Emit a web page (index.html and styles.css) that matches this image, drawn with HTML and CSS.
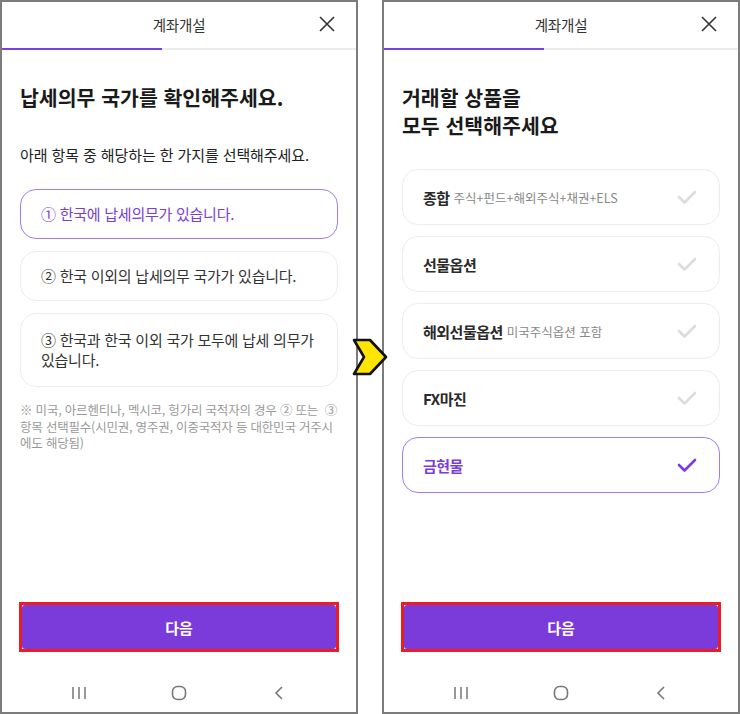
FILE: index.html
```html
<!DOCTYPE html>
<html lang="ko">
<head>
  <meta charset="UTF-8">
  <meta name="viewport" content="width=device-width, initial-scale=1.0">
  <title>계좌개설</title>
  <link rel="stylesheet" href="styles.css">
</head>
<body>
  <!-- 1단계: 납세의무 국가 -->
  <div class="phone">
    <div class="header">
      <span class="title">계좌개설</span>
      <svg class="close" width="18" height="18" viewBox="0 0 18 18"><path d="M2 2L16 16M16 2L2 16" stroke="#333" stroke-width="1.6" fill="none"/></svg>
    </div>
    <div class="progress"><div class="progress-fill"></div></div>

    <div class="content">
      <h1 class="heading">납세의무 국가를 확인해주세요.</h1>
      <p class="sub">아래 항목 중 해당하는 한 가지를 선택해주세요.</p>

      <div class="choices">
        <div class="choice selected">① 한국에 납세의무가 있습니다.</div>
        <div class="choice">② 한국 이외의 납세의무 국가가 있습니다.</div>
        <div class="choice tall">③ 한국과 한국 이외 국가 모두에 납세 의무가 있습니다.</div>
      </div>

      <p class="note">※ 미국, 아르헨티나, 멕시코, 헝가리 국적자의 경우 ② 또는 &nbsp;③ 항목 선택필수(시민권, 영주권, 이중국적자 등 대한민국 거주시에도 해당됨)</p>

      <div class="next-wrap"><button class="next">다음</button></div>
    </div>

    <div class="navbar">
      <svg width="100" height="16" viewBox="0 0 100 16"><path d="M44 2V14M50 2V14M56 2V14" stroke="#777" stroke-width="1.5"/></svg>
      <svg width="100" height="16" viewBox="0 0 100 16"><rect x="43.5" y="1.5" width="13" height="13" rx="5" stroke="#777" stroke-width="1.6" fill="none"/></svg>
      <svg width="100" height="16" viewBox="0 0 100 16"><path d="M53 2L47 8L53 14" stroke="#777" stroke-width="1.6" fill="none"/></svg>
    </div>
  </div>

  <!-- 2단계: 거래할 상품 -->
  <div class="phone">
    <div class="header">
      <span class="title">계좌개설</span>
      <svg class="close" width="18" height="18" viewBox="0 0 18 18"><path d="M2 2L16 16M16 2L2 16" stroke="#333" stroke-width="1.6" fill="none"/></svg>
    </div>
    <div class="progress"><div class="progress-fill"></div></div>

    <div class="content">
      <h1 class="heading">거래할 상품을<br>모두 선택해주세요</h1>

      <div class="products">
        <div class="product">
          <span class="name">종합</span><span class="desc">주식+펀드+해외주식+채권+ELS</span>
          <svg class="check" width="20" height="16" viewBox="0 0 20 16"><path d="M2 8L7.5 13.5L18 3" stroke="#dcdcdf" stroke-width="2.6" fill="none" stroke-linecap="round" stroke-linejoin="round"/></svg>
        </div>
        <div class="product">
          <span class="name">선물옵션</span>
          <svg class="check" width="20" height="16" viewBox="0 0 20 16"><path d="M2 8L7.5 13.5L18 3" stroke="#dcdcdf" stroke-width="2.6" fill="none" stroke-linecap="round" stroke-linejoin="round"/></svg>
        </div>
        <div class="product">
          <span class="name">해외선물옵션</span><span class="desc">미국주식옵션 포함</span>
          <svg class="check" width="20" height="16" viewBox="0 0 20 16"><path d="M2 8L7.5 13.5L18 3" stroke="#dcdcdf" stroke-width="2.6" fill="none" stroke-linecap="round" stroke-linejoin="round"/></svg>
        </div>
        <div class="product">
          <span class="name">FX마진</span>
          <svg class="check" width="20" height="16" viewBox="0 0 20 16"><path d="M2 8L7.5 13.5L18 3" stroke="#dcdcdf" stroke-width="2.6" fill="none" stroke-linecap="round" stroke-linejoin="round"/></svg>
        </div>
        <div class="product selected">
          <span class="name">금현물</span>
          <svg class="check" width="20" height="16" viewBox="0 0 20 16"><path d="M2 8L7.5 13.5L18 3" stroke="#7a3ed8" stroke-width="2.6" fill="none" stroke-linecap="round" stroke-linejoin="round"/></svg>
        </div>
      </div>

      <div class="next-wrap"><button class="next">다음</button></div>
    </div>

    <div class="navbar">
      <svg width="100" height="16" viewBox="0 0 100 16"><path d="M44 2V14M50 2V14M56 2V14" stroke="#777" stroke-width="1.5"/></svg>
      <svg width="100" height="16" viewBox="0 0 100 16"><rect x="43.5" y="1.5" width="13" height="13" rx="5" stroke="#777" stroke-width="1.6" fill="none"/></svg>
      <svg width="100" height="16" viewBox="0 0 100 16"><path d="M53 2L47 8L53 14" stroke="#777" stroke-width="1.6" fill="none"/></svg>
    </div>
  </div>

  <!-- 화살표 -->
  <svg class="arrow" width="38" height="40" viewBox="0 0 38 40">
    <path d="M3 3H19L35 20L19 37H3L13 20Z" fill="#ffe500" stroke="#111" stroke-width="2.6" stroke-linejoin="round"/>
  </svg>
</body>
</html>
```

FILE: styles.css
```css
body {
  margin: 0;
  width: 740px;
  height: 714px;
  display: flex;
  gap: 24px;
  background: #fff;
  font-family: 'Noto Sans CJK KR', 'Noto Sans', sans-serif;
  color: #222;
  position: relative;
  overflow: hidden;
}

.phone {
  width: 358px;
  height: 714px;
  box-sizing: border-box;
  border: 2px solid #7c7c7c;
  display: flex;
  flex-direction: column;
  background: #fff;
}

.header {
  height: 44px;
  display: flex;
  align-items: center;
  justify-content: center;
  position: relative;
  padding-bottom: 2px;
}

.title {
  font-size: 14.5px;
  color: #333;
  letter-spacing: -0.2px;
}

.close {
  position: absolute;
  right: 20px;
  top: 13px;
}

.progress {
  height: 2px;
  background: #ececec;
}

.progress-fill {
  width: 160px;
  height: 2px;
  background: #7b3fe0;
}

.content {
  flex: 1;
  display: flex;
  flex-direction: column;
  padding: 0 18px;
}

.heading {
  margin: 33px 0 0;
  font-size: 20.5px;
  line-height: 28px;
  font-weight: 700;
  color: #1a1a1a;
}

.sub {
  margin: 34px 0 0;
  font-size: 15px;
  line-height: 20px;
  letter-spacing: -0.1px;
  color: #222;
}

.choices {
  margin-top: 24px;
  display: flex;
  flex-direction: column;
  gap: 12px;
}

.choice {
  border: 1px solid #ededed;
  border-radius: 16px;
  padding: 14px 12px 14px 20px;
  font-size: 15px;
  line-height: 20px;
  letter-spacing: -0.25px;
  color: #333;
  word-break: keep-all;
}

.choice.tall {
  padding-top: 16px;
  padding-bottom: 16px;
}

.choice.selected {
  border-color: #a57de8;
  color: #7a3ed8;
}

.note {
  margin: 15px 0 0;
  font-size: 12.5px;
  line-height: 16.5px;
  color: #9a9a9a;
  letter-spacing: -0.2px;
  word-break: break-all;
}

.products {
  margin-top: 30px;
  display: flex;
  flex-direction: column;
  gap: 11px;
}

.product {
  height: 56px;
  box-sizing: border-box;
  border: 1px solid #ededed;
  border-radius: 16px;
  padding: 0 22px 0 20px;
  display: flex;
  align-items: center;
}

.product .name {
  font-size: 15px;
  font-weight: 700;
  letter-spacing: -0.5px;
  color: #2a2a2a;
}

.product .desc {
  margin-left: 4px;
  font-size: 12.5px;
  color: #888;
}

.product .check {
  margin-left: auto;
}

.product.selected {
  border-color: #a57de8;
}

.product.selected .name {
  color: #7a3ed8;
}

.next-wrap {
  margin: auto -1px 18px;
  border: 3px solid #ec1c24;
  background: #fff;
}

.next {
  display: block;
  width: 100%;
  height: 44px;
  border: none;
  border-radius: 3px;
  background: #7b3bdb;
  color: #fff;
  font-family: inherit;
  font-size: 15px;
  font-weight: 700;
}

.navbar {
  height: 42px;
  box-sizing: border-box;
  display: flex;
  justify-content: center;
  align-items: center;
  padding-top: 4px;
}

.arrow {
  position: absolute;
  left: 351px;
  top: 337px;
}
```
